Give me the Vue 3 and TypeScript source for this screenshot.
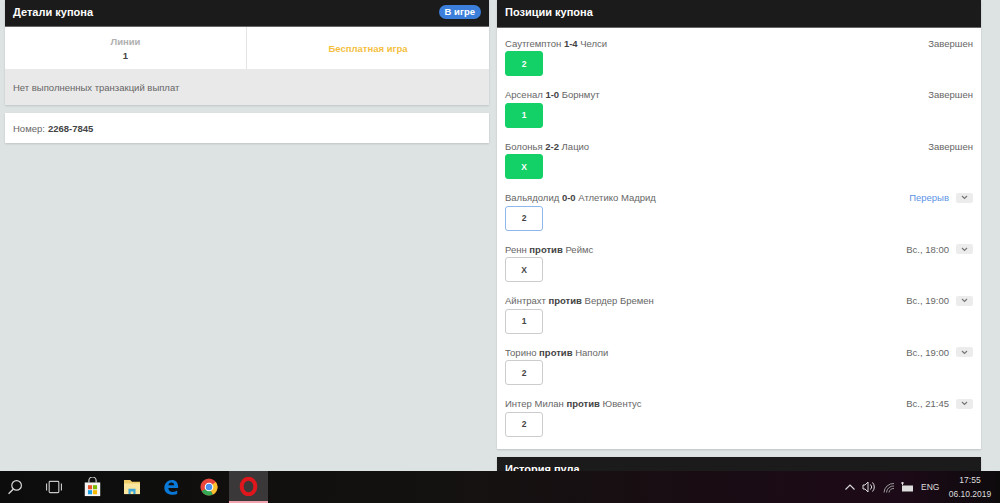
<script setup lang="ts">
interface Item { home: string; mid: string; away: string; status: string; pick: string; state: 'won' | 'live' | 'open' }
const items: Item[] = [
  { home: 'Саутгемптон', mid: '1-4', away: 'Челси', status: 'Завершен', pick: '2', state: 'won' },
  { home: 'Арсенал', mid: '1-0', away: 'Борнмут', status: 'Завершен', pick: '1', state: 'won' },
  { home: 'Болонья', mid: '2-2', away: 'Лацио', status: 'Завершен', pick: 'X', state: 'won' },
  { home: 'Вальядолид', mid: '0-0', away: 'Атлетико Мадрид', status: 'Перерыв', pick: '2', state: 'live' },
  { home: 'Ренн', mid: 'против', away: 'Реймс', status: 'Вс., 18:00', pick: 'X', state: 'open' },
  { home: 'Айнтрахт', mid: 'против', away: 'Вердер Бремен', status: 'Вс., 19:00', pick: '1', state: 'open' },
  { home: 'Торино', mid: 'против', away: 'Наполи', status: 'Вс., 19:00', pick: '2', state: 'open' },
  { home: 'Интер Милан', mid: 'против', away: 'Ювентус', status: 'Вс., 21:45', pick: '2', state: 'open' },
]
</script>

<template>
  <div class="screen">
    <main class="page">
      <section class="col">
        <div class="panel">
          <header class="head head-left">
            <h2>Детали купона</h2>
            <span class="badge">В игре</span>
          </header>
          <div class="summary">
            <div class="cell">
              <span class="cell-label">Линии</span>
              <strong class="cell-value">1</strong>
            </div>
            <div class="cell free">Бесплатная игра</div>
          </div>
          <div class="notice">Нет выполненных транзакций выплат</div>
        </div>
        <div class="panel number">Номер: <b>2268-7845</b></div>
      </section>

      <section class="col">
        <div class="panel">
          <header class="head"><h2>Позиции купона</h2></header>
          <ul class="rows">
            <li v-for="(it, i) in items" :key="i" class="row">
              <div class="line">
                <span>{{ it.home }} <b>{{ it.mid }}</b> {{ it.away }}</span>
                <span class="status">
                  <span :class="{ live: it.state === 'live' }">{{ it.status }}</span>
                  <span v-if="it.state !== 'won'" class="toggle">
                    <svg width="7" height="5" viewBox="0 0 7 5"><path d="M1 1l2.5 2.5L6 1" fill="none" stroke="#777" stroke-width="1.2" /></svg>
                  </span>
                </span>
              </div>
              <div class="pick" :class="it.state">{{ it.pick }}</div>
            </li>
          </ul>
        </div>
        <div class="panel">
          <header class="head head-last"><h2>История пула</h2></header>
        </div>
      </section>
    </main>

    <footer class="taskbar">
      <div class="tasks">
        <span class="task">
          <svg width="16" height="16" viewBox="0 0 20 20"><circle cx="12" cy="8" r="6" fill="none" stroke="#d8d8d8" stroke-width="1.5" /><path d="M8 12.500l-6 6" stroke="#d8d8d8" stroke-width="1.700" /></svg>
        </span>
        <span class="task">
          <svg width="18" height="14" viewBox="0 0 20 16"><rect x="4.500" y="1.500" width="11" height="13" rx="1" fill="none" stroke="#c8c8c8" stroke-width="1.300" /><path d="M1.500 4v8M18.500 4v8" stroke="#c8c8c8" stroke-width="1.300" /></svg>
        </span>
        <span class="task">
          <svg width="19" height="20" viewBox="0 0 20 22"><path d="M6 6V4a4 4 0 0 1 8 0v2" fill="none" stroke="#ccc" stroke-width="1.300" /><rect x="1.500" y="6" width="17" height="15" fill="#f4f4f4" /><rect x="5" y="9" width="4.500" height="4.500" fill="#e8532b" /><rect x="10.500" y="9" width="4.500" height="4.500" fill="#7fb800" /><rect x="5" y="14.500" width="4.500" height="4.500" fill="#1b9de2" /><rect x="10.500" y="14.500" width="4.500" height="4.500" fill="#f7b900" /></svg>
        </span>
        <span class="task">
          <svg width="18" height="16" viewBox="0 0 20 18"><path d="M1 1h7l2 2h9v14H1z" fill="#f0cd68" /><rect x="1" y="5" width="18" height="12" fill="#fbe6a0" /><path d="M6 17v-6h8v6h-2.500v-3h-3v3z" fill="#3fa9dc" /></svg>
        </span>
        <span class="task">
          <svg width="16" height="16" viewBox="0 0 18 18"><path d="M1.500 10C1.500 4.500 5.500 1 10 1c4.500 0 7 3 7 7.500v1.500H6c.2 2.800 2.200 4.500 5 4.500 2 0 3.700-.6 5-1.500v3.500c-1.400.8-3.300 1.200-5.300 1.200C5.500 17.700 1.500 14.800 1.500 10zM6.100 7h6.400c0-1.900-1.100-3.100-3-3.100-1.800 0-3.100 1.200-3.400 3.100z" fill="#0a78d7" /></svg>
        </span>
        <span class="task">
          <svg width="18" height="18" viewBox="0 0 20 20"><circle cx="10" cy="10" r="9.500" fill="#e8453c" /><path d="M10 10 L1.800 14.800 A9.500 9.500 0 0 0 14.500 18.400z" fill="#34a853" /><path d="M10 10 L14.500 18.400 A9.500 9.500 0 0 0 19.500 10 A9.500 9.500 0 0 0 17.500 4.500z" fill="#fbc02d" /><circle cx="10" cy="10" r="4.800" fill="#fff" /><circle cx="10" cy="10" r="3.600" fill="#4d8ff0" /></svg>
        </span>
        <span class="task task-active">
          <svg width="19" height="19" viewBox="0 0 20 20"><ellipse cx="10" cy="10" rx="7.200" ry="8.200" fill="none" stroke="#e0161d" stroke-width="4.200" /></svg>
        </span>
      </div>
      <div class="tray">
        <svg class="t-up" width="10" height="6" viewBox="0 0 10 6"><path d="M.5 5.500L5 1l4.500 4.500" fill="none" stroke="#ddd" stroke-width="1.100" /></svg>
        <svg class="t-sound" width="14" height="12" viewBox="0 0 14 12"><path d="M1 4h2l3-3v10L3 8H1zM8.500 3.500a3.500 3.500 0 0 1 0 5M10.500 1.500a6.500 6.500 0 0 1 0 9" fill="none" stroke="#ddd" stroke-width="1" /></svg>
        <svg class="t-wifi" width="12" height="11" viewBox="0 0 12 11"><path d="M1 10.500a9.500 9.500 0 0 1 10-9M3.500 10.500a7 7 0 0 1 7.500-6.500M6 10.500a4.500 4.500 0 0 1 5-4" fill="none" stroke="#999" stroke-width="1" /></svg>
        <svg class="t-batt" width="14" height="11" viewBox="0 0 14 11"><rect x="2" y="3.500" width="11" height="6" fill="#ddd" /><path d="M1 1h3M2.500 0v3" stroke="#ddd" stroke-width="1" /></svg>
        <span class="lang">ENG</span>
        <div class="clock"><span>17:55</span><span>06.10.2019</span></div>
      </div>
    </footer>
  </div>
</template>

<style>
html, body { margin: 0; overflow: hidden; }
</style>

<style scoped>
.screen {
  width: 1000px;
  height: 503px;
  display: flex;
  flex-direction: column;
  background: #dde3e3;
  font-family: "Liberation Sans", Arial, sans-serif;
  font-size: 9.500px;
  color: #555;
}
.page {
  flex: 1;
  min-height: 0;
  overflow: hidden;
  display: grid;
  grid-template-columns: 484px 484px;
  gap: 8px;
  padding-left: 5px;
}
.col { display: flex; flex-direction: column; gap: 8px; }
.panel { background: #fff; box-shadow: 0 1px 2px rgba(0, 0, 0, .14); }
.head {
  height: 28px;
  padding: 0 8px 3px;
  box-sizing: border-box;
  display: flex;
  align-items: center;
  justify-content: space-between;
  background: #1b1b1b;
  border-bottom: 1px solid #666;
  color: #fff;
}
.head-left { height: 27px; padding-bottom: 2px; }
.head-last { height: 28px; border: 0; }
.head h2 { margin: 0; font-size: 11px; font-weight: 700; }
.badge {
  height: 14px;
  padding: 0 6px;
  border-radius: 7px;
  background: #3b7fdb;
  font-size: 9.500px;
  font-weight: 700;
  line-height: 14px;
}
.summary { height: 42px; display: grid; grid-template-columns: 242px 1fr; }
.cell {
  display: flex;
  flex-direction: column;
  align-items: center;
  justify-content: center;
  gap: 3px;
  line-height: 11px;
}
.cell:first-child { border-right: 1px solid #e4e4e4; }
.cell-label { color: #b0b0b0; font-weight: 700; }
.cell-value { color: #444; }
.free { color: #f4bf3f; font-weight: 700; }
.notice {
  height: 36px;
  padding: 0 8px;
  display: flex;
  align-items: center;
  background: #e9e9e9;
  color: #666;
}
.number { height: 30px; padding: 0 8px; display: flex; align-items: center; gap: 3px; color: #666; }
.number b { color: #444; }
.rows { margin: 0; padding: 8px 8px 12px; list-style: none; }
.row + .row { margin-top: 11.500px; }
.line {
  height: 14px;
  display: flex;
  align-items: center;
  justify-content: space-between;
  color: #666;
}
.line b { color: #444; }
.status { display: flex; align-items: center; gap: 7px; }
.live { color: #5c93e6; }
.toggle {
  width: 17px;
  height: 10px;
  display: flex;
  align-items: center;
  justify-content: center;
  border-radius: 2px;
  background: #ececec;
}
.pick {
  width: 38px;
  height: 25px;
  margin-top: 1px;
  box-sizing: border-box;
  display: flex;
  align-items: center;
  justify-content: center;
  border-radius: 3px;
  border: 1px solid #ccc;
  color: #444;
  font-size: 8.500px;
  font-weight: 700;
}
.won { background: #13d067; border-color: #13d067; color: #fff; }
.pick.live { border-color: #8fb6ee; color: #444; }
.taskbar {
  height: 32px;
  flex: none;
  display: flex;
  justify-content: space-between;
  background: linear-gradient(90deg, #0c0c0c 0%, #141210 45%, #1a0c14 75%, #1d0a18 90%, #0d0a0c 100%);
  color: #ddd;
}
.tasks { display: flex; margin-left: -4px; }
.task {
  width: 38.800px;
  display: flex;
  align-items: center;
  justify-content: center;
  box-sizing: border-box;
}
.task-active { background: #3a3838; border-bottom: 2px solid #f0a5ae; }
.tray { display: flex; align-items: center; padding-right: 8px; }
.t-sound { margin-left: 7px; }
.t-wifi { margin-left: 7px; }
.t-batt { margin-left: 5px; }
.lang { margin-left: 7px; width: 18px; font-size: 8.500px; }
.clock {
  width: 44px;
  margin-left: 9px;
  display: flex;
  flex-direction: column;
  align-items: center;
  gap: 3px;
  font-size: 8.500px;
  line-height: 11px;
}
</style>
